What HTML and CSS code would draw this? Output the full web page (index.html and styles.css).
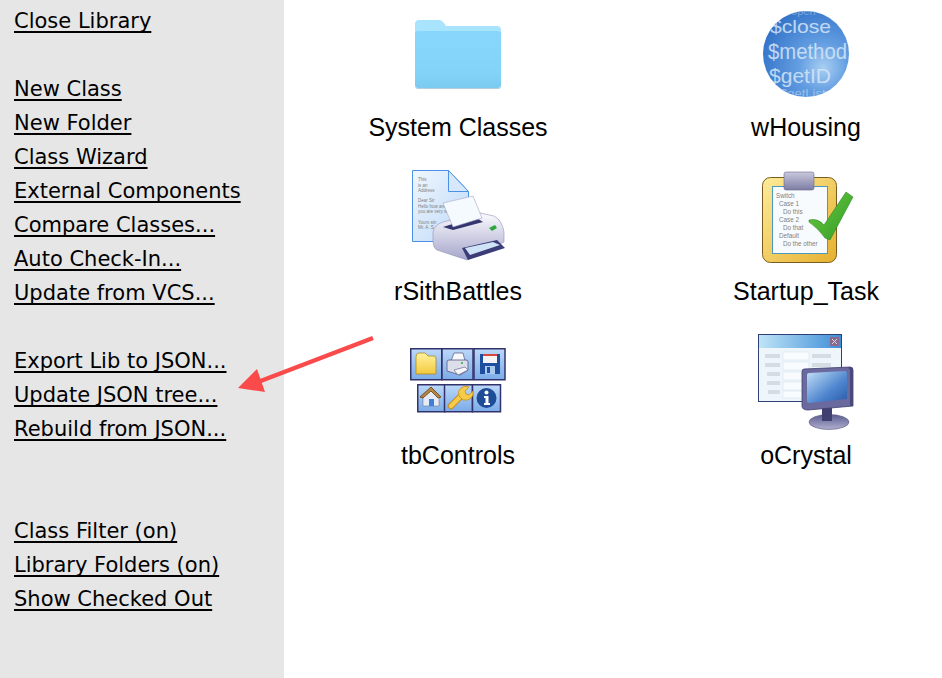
FILE: index.html
```html
<!DOCTYPE html>
<html lang="en">
<head>
    <meta charset="UTF-8">
    <title>Class Library</title>
    <link rel="stylesheet" href="styles.css">
</head>
<body>
    <nav class="sidebar">
        <a href="#">Close Library</a>
        <div class="gap"></div>
        <a href="#">New Class</a>
        <a href="#">New Folder</a>
        <a href="#">Class Wizard</a>
        <a href="#">External Components</a>
        <a href="#">Compare Classes...</a>
        <a href="#">Auto Check-In...</a>
        <a href="#">Update from VCS...</a>
        <div class="gap"></div>
        <a href="#">Export Lib to JSON...</a>
        <a href="#">Update JSON tree...</a>
        <a href="#">Rebuild from JSON...</a>
        <div class="gap"></div>
        <div class="gap"></div>
        <a href="#">Class Filter (on)</a>
        <a href="#">Library Folders (on)</a>
        <a href="#">Show Checked Out</a>
    </nav>

    <main class="library">
        <!-- System Classes -->
        <div class="item">
            <svg class="icon" viewBox="0 0 96 96">
                <defs>
                    <linearGradient id="folderFront" x1="0" y1="0" x2="0" y2="1">
                        <stop offset="0" stop-color="#88d7fb"/>
                        <stop offset="0.75" stop-color="#83d3f9"/>
                        <stop offset="1" stop-color="#7bcbf1"/>
                    </linearGradient>
                </defs>
                <path d="M5 18q0-4 4-4h20q3 0 4 2l3 4h51q4 0 4 4v20H5z" fill="#a9e4ff"/>
                <path d="M5 28q0-3 3-3h80q3 0 3 3v51q0 3-3 3H8q-3 0-3-3z" fill="url(#folderFront)"/>
                <path d="M5 79q0 3 3 3h80q3 0 3-3v1q0 3-3 3H8q-3 0-3-3z" fill="#b5cfdc"/>
            </svg>
            <div class="name">System Classes</div>
        </div>

        <!-- wHousing -->
        <div class="item">
            <svg class="icon" viewBox="0 0 96 96">
                <defs>
                    <radialGradient id="ball" cx="0.7" cy="0.66" r="0.8">
                        <stop offset="0" stop-color="#a9cff2"/>
                        <stop offset="0.35" stop-color="#659fe2"/>
                        <stop offset="1" stop-color="#2f6fc6"/>
                    </radialGradient>
                    <clipPath id="ballClip"><circle cx="48" cy="48" r="43"/></clipPath>
                </defs>
                <circle cx="48" cy="48" r="43" fill="url(#ball)"/>
                <g clip-path="url(#ballClip)" class="ball-text">
                    <text x="27" y="9" font-size="11" opacity=".5">$open</text>
                    <text x="12" y="27" font-size="19" textLength="61" lengthAdjust="spacingAndGlyphs">$close</text>
                    <text x="10" y="53" font-size="22" textLength="79" lengthAdjust="spacingAndGlyphs">$method</text>
                    <text x="11" y="77" font-size="21" textLength="62" lengthAdjust="spacingAndGlyphs">$getID</text>
                    <text x="22" y="92" font-size="13" opacity=".6">$getList</text>
                </g>
            </svg>
            <div class="name">wHousing</div>
        </div>

        <!-- rSithBattles -->
        <div class="item">
            <svg class="icon" viewBox="0 0 96 96">
                <defs>
                    <linearGradient id="sheet" x1="0" y1="0" x2="1" y2="1">
                        <stop offset="0" stop-color="#f0f7fe"/>
                        <stop offset="1" stop-color="#bcd8f8"/>
                    </linearGradient>
                    <linearGradient id="printerBody" x1="0" y1="0" x2="0" y2="1">
                        <stop offset="0" stop-color="#fbfbfe"/>
                        <stop offset="1" stop-color="#a5a5cb"/>
                    </linearGradient>
                </defs>
                <path d="M2.500 .5h36l20 21v50h-56z" fill="url(#sheet)" stroke="#4a90e8"/>
                <path d="M38.500 .5v21h20z" fill="#d7e8fb" stroke="#4a90e8"/>
                <g class="doc-text" font-size="4.500">
                    <text x="8" y="11">This</text>
                    <text x="8" y="17">is an</text>
                    <text x="8" y="22">Address</text>
                    <text x="8" y="32">Dear Sir</text>
                    <text x="8" y="38">Hello how are</text>
                    <text x="8" y="43">you are very w</text>
                    <text x="8" y="54">Yours sin</text>
                    <text x="8" y="59">Mr. A. S</text>
                </g>
                <path d="M27 80Q23 78 23 70V62Q24 55 33 52L70 43L84 46Q92 50 94 62V72L57 90z" fill="url(#printerBody)" stroke="#9090b8" stroke-width=".6"/>
                <path d="M33 57L43 60L73 52L65 47z" fill="#34346f"/>
                <path d="M33 33L63 26L72 48L43 57z" fill="#f5faff" stroke="#a6a6c4" stroke-width=".6"/>
                <path d="M79 58L85 55L87 58L82 61z" fill="#2fa63a"/>
                <path d="M52 78L87 70L95 78L58 90z" fill="#3c3c78"/>
                <path d="M55 78L83 72L90 75L60 85z" fill="#cfe3f7"/>
            </svg>
            <div class="name">rSithBattles</div>
        </div>

        <!-- Startup_Task -->
        <div class="item">
            <svg class="icon" viewBox="0 0 96 96">
                <defs>
                    <linearGradient id="board" x1="0" y1="0" x2="1" y2="1">
                        <stop offset="0" stop-color="#fdeb9a"/>
                        <stop offset="1" stop-color="#e6b02e"/>
                    </linearGradient>
                    <linearGradient id="clip" x1="0" y1="0" x2="0" y2="1">
                        <stop offset="0" stop-color="#c9c9dc"/>
                        <stop offset="1" stop-color="#7c7ca4"/>
                    </linearGradient>
                    <linearGradient id="tick" x1="0" y1="0" x2="1" y2="1">
                        <stop offset="0" stop-color="#6fcb3c"/>
                        <stop offset="1" stop-color="#2f9a2a"/>
                    </linearGradient>
                </defs>
                <rect x="4.500" y="7.500" width="74" height="85" rx="8" fill="url(#board)" stroke="#7a5c1e"/>
                <rect x="14.500" y="16.500" width="55" height="67" fill="#f8fbfd" stroke="#4a9ac0"/>
                <rect x="26" y="2" width="30" height="18" rx="2" fill="url(#clip)" stroke="#6a6a90" stroke-width=".6"/>
                <g class="doc-text" font-size="6.300">
                    <text x="18" y="28">Switch</text>
                    <text x="21" y="36">Case 1</text>
                    <text x="25" y="44">Do this</text>
                    <text x="21" y="52">Case 2</text>
                    <text x="25" y="60">Do that</text>
                    <text x="21" y="68">Default</text>
                    <text x="25" y="76">Do the other</text>
                </g>
                <path d="M51 50Q60 48 66 55L88 22L95 27L72 70L67 68Q60 58 51 52z" fill="url(#tick)" stroke="#2f8a2a" stroke-width=".6"/>
            </svg>
            <div class="name">Startup_Task</div>
        </div>

        <!-- tbControls -->
        <div class="item">
            <svg class="icon" viewBox="0 0 96 96">
                <defs>
                    <linearGradient id="btn" x1="0" y1="0" x2="0" y2="1">
                        <stop offset="0" stop-color="#bcd8f8"/>
                        <stop offset="1" stop-color="#7aabe8"/>
                    </linearGradient>
                    <linearGradient id="yellow" x1="0" y1="0" x2="0" y2="1">
                        <stop offset="0" stop-color="#fff3a0"/>
                        <stop offset="1" stop-color="#f4c93c"/>
                    </linearGradient>
                </defs>
                <g fill="url(#btn)" stroke="#33336b" stroke-width="1.500">
                    <rect x=".75" y="14.750" width="31" height="31"/>
                    <rect x="32" y="14.750" width="31" height="31"/>
                    <rect x="64" y="14.750" width="31" height="31"/>
                    <rect x="7.750" y="50.750" width="27" height="27"/>
                    <rect x="34.500" y="50.750" width="28" height="27"/>
                    <rect x="62.500" y="50.750" width="28" height="27"/>
                </g>
                <!-- folder -->
                <path d="M6 23q0-4 3-4h6l3 3h6q2 0 2 2v16H6z" fill="url(#yellow)" stroke="#b08a22" stroke-width=".8"/>
                <!-- printer -->
                <path d="M41 27l3-8h9l2 8z" fill="#f6f8fc" stroke="#555580" stroke-width=".7"/>
                <path d="M37 28q0-2 2-2h17q2 0 2 2v8l-8 5-13-4z" fill="#dcdeea" stroke="#555580" stroke-width=".8"/>
                <path d="M44 36l11-3 3 3-10 5z" fill="#f6f8fc" stroke="#555580" stroke-width=".6"/>
                <circle cx="52" cy="29" r="1" fill="#2fa63a"/>
                <!-- disk -->
                <rect x="70" y="20" width="20" height="20" fill="#1d4f9e"/>
                <rect x="73" y="20" width="14" height="9" fill="#f4f4f4"/>
                <rect x="73" y="20" width="14" height="2" fill="#d9483b"/>
                <rect x="75" y="32" width="10" height="8" fill="#a9c9ee"/>
                <rect x="77" y="33" width="3" height="6" fill="#1d4f9e"/>
                <!-- home -->
                <path d="M13 63l8-8 8 8v9H13z" fill="#e6eaf6" stroke="#66668a" stroke-width=".5"/>
                <path d="M10 63l11-10 10 10-3 1-7-7-8 7z" fill="#b5843f" stroke="#5f4016" stroke-width=".8"/>
                <rect x="19" y="65" width="5" height="7" fill="#3b7fd9"/>
                <!-- wrench -->
                <path d="M41 72L52 61" stroke="#c48e1f" stroke-width="6.500" stroke-linecap="round"/>
                <path d="M41 72L52 61" stroke="#f6cb4a" stroke-width="4.500" stroke-linecap="round"/>
                <path d="M49 62q-2-5 2-8t8-1l-4 4 1 3 3 1 4-4q1 4-2 7t-8 2z" fill="#f6cb4a" stroke="#c48e1f" stroke-width=".8"/>
                <!-- info -->
                <circle cx="76.500" cy="64" r="10" fill="#1f4c96"/>
                <circle cx="76.500" cy="58.500" r="2" fill="#fff"/>
                <path d="M74 62h4.500v7h1.500v2h-6v-2h1.500v-5h-1.500z" fill="#fff"/>
            </svg>
            <div class="name">tbControls</div>
        </div>

        <!-- oCrystal -->
        <div class="item">
            <svg class="icon" viewBox="0 0 96 96">
                <defs>
                    <linearGradient id="titleBar" x1="0" y1="0" x2="1" y2="0">
                        <stop offset="0" stop-color="#bfe4f7"/>
                        <stop offset="1" stop-color="#3f8ed8"/>
                    </linearGradient>
                    <linearGradient id="screen" x1="0" y1="0" x2="1" y2="1">
                        <stop offset="0" stop-color="#c4e0f7"/>
                        <stop offset="0.6" stop-color="#4f86cf"/>
                        <stop offset="1" stop-color="#2a5aa8"/>
                    </linearGradient>
                    <linearGradient id="stand" x1="0" y1="0" x2="0" y2="1">
                        <stop offset="0" stop-color="#5c5c90"/>
                        <stop offset="1" stop-color="#b0b0d0"/>
                    </linearGradient>
                </defs>
                <rect x=".5" y=".5" width="83" height="67" fill="#eef6fb" stroke="#2f3f78"/>
                <rect x="1" y="1" width="82" height="13" fill="url(#titleBar)"/>
                <rect x="72" y="3" width="9" height="9" fill="#8a6a8c"/>
                <path d="M74 5l5 5M79 5l-5 5" stroke="#d8d8e0" stroke-width="1"/>
                <g fill="#d5dde4">
                    <rect x="7" y="20" width="15" height="4"/>
                    <rect x="7" y="29" width="15" height="4"/>
                    <rect x="9" y="38" width="13" height="4"/>
                    <rect x="9" y="47" width="13" height="4"/>
                    <rect x="10" y="56" width="12" height="4"/>
                    <rect x="54" y="20" width="19" height="4"/>
                    <rect x="54" y="29" width="19" height="4"/>
                </g>
                <g fill="#f9fcfe" stroke="#d5e4ec" stroke-width=".6">
                    <rect x="25" y="18" width="26" height="8"/>
                    <rect x="25" y="28" width="26" height="8"/>
                    <rect x="25" y="38" width="26" height="8"/>
                    <rect x="25" y="48" width="26" height="8"/>
                    <rect x="25" y="57" width="26" height="7"/>
                </g>
                <ellipse cx="71" cy="88" rx="20" ry="7.500" fill="url(#stand)" stroke="#55557f" stroke-width=".6"/>
                <rect x="64" y="74" width="10" height="13" fill="#3f3f70"/>
                <path d="M46 35L92 33q3 0 3 3V72L50 76q-6 0-6-4V38q0-3 2-3z" fill="#6a6a9e" stroke="#3f3f70" stroke-width=".8"/>
                <path d="M89 34q3 0 3 3V72l3 0V36q0-3-3-3z" fill="#48487a"/>
                <path d="M51 39L87 37q2 0 2 2V65L51 69q-2 0-2-2V41q0-2 2-2z" fill="url(#screen)"/>
            </svg>
            <div class="name">oCrystal</div>
        </div>
    </main>

    <!-- annotation arrow drawn over the page -->
    <svg class="arrow" width="942" height="678" viewBox="0 0 942 678">
        <path d="M373 338L258 382" stroke="#fb4a4a" stroke-width="4.500" fill="none"/>
        <path d="M238 388L257 369L265 392z" fill="#fb4a4a"/>
    </svg>
</body>
</html>
```

FILE: styles.css
```css
html, body {
    height: 100%;
}
body {
    margin: 0;
    display: flex;
    overflow: hidden;
    background-color: white;
    color: black;
    font-family: "Liberation Sans", Arial, sans-serif;
}
.sidebar {
    width: 270px;
    flex-shrink: 0;
    padding: 4px 0 0 14px;
    background-color: #e6e6e6;
    font-family: "DejaVu Sans", sans-serif;
    font-size: 21px;
    line-height: 34px;
}
.sidebar a {
    display: block;
    width: fit-content;
    color: black;
    text-decoration: underline;
    text-decoration-thickness: 2px;
    text-decoration-skip-ink: none;
    text-underline-offset: 3px;
}
.gap {
    height: 34px;
}
.library {
    display: grid;
    grid-template-columns: 200px 200px;
    grid-auto-rows: 164px;
    column-gap: 148px;
    padding-left: 74px;
}
.item {
    display: flex;
    flex-direction: column;
    align-items: center;
    padding-top: 6px;
}
.icon {
    display: block;
    width: 96px;
    height: 96px;
    flex-shrink: 0;
}
.name {
    margin-top: 5px;
    font-size: 25px;
    line-height: 40px;
}
.ball-text {
    font-family: "Liberation Sans", sans-serif;
    fill: #d5e6f8;
    opacity: 0.85;
}
.doc-text {
    font-family: "Liberation Sans", sans-serif;
    fill: #808080;
}
.arrow {
    position: absolute;
    top: 0;
    left: 0;
    pointer-events: none;
}
```
